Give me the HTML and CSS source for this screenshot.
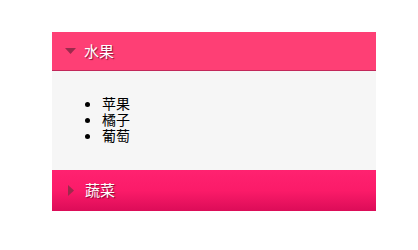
FILE: index.html
```html
<!DOCTYPE html>
<html>
<head>
<meta charset="utf-8">
<link rel="stylesheet" href="styles.css">
</head>
<body>
<div class="accordion">
  <div class="header open">
    <svg class="arrow down" width="11" height="6" viewBox="0 0 11 6"><polygon points="0,0 11,0 5.5,6" fill="#9c2a4c"/></svg>
    <span class="title">水果</span>
  </div>
  <div class="panel">
    <ul class="list">
      <li>苹果</li>
      <li>橘子</li>
      <li>葡萄</li>
    </ul>
  </div>
  <div class="header closed">
    <svg class="arrow side" width="6" height="11" viewBox="0 0 6 11"><polygon points="0,0 6,5.5 0,11" fill="#9c2a4c"/></svg>
    <span class="title">蔬菜</span>
  </div>
</div>
</body>
</html>
```
FILE: styles.css
```css
html, body {
  margin: 0;
  padding: 0;
  background: #ffffff;
}
body {
  padding: 32px 42px 0 52px;
  font-family: "Noto Sans CJK SC", "Liberation Sans", sans-serif;
}
.accordion {
  width: 324px;
}
.header {
  display: flex;
  align-items: center;
  color: #ffffff;
  font-size: 15px;
  text-shadow: 1px 1px 1px rgba(90, 0, 30, 0.7);
}
.header.open {
  height: 38px;
  background: #fe3f75;
  border-bottom: 1px solid #c2275a;
}
.header.closed {
  height: 41px;
  background: linear-gradient(to bottom, #ff2270 0%, #fb1b69 50%, #dc0c58 100%);
}
.arrow {
  display: block;
  flex: none;
}
.arrow.down {
  margin-left: 13px;
  margin-right: 8px;
}
.arrow.side {
  margin-left: 16px;
  margin-right: 11px;
}
.title {
  line-height: 20px;
  margin-top: -1px;
}
.panel {
  background: #f6f6f6;
  padding: 10px 10px 13px;
}
.list {
  margin: 14px 0;
  padding-left: 40px;
  font-size: 14px;
  line-height: 16px;
  color: #000000;
  font-family: "Noto Sans CJK SC", sans-serif;
}
.list li {
  height: 16px;
  line-height: 16px;
}
```
